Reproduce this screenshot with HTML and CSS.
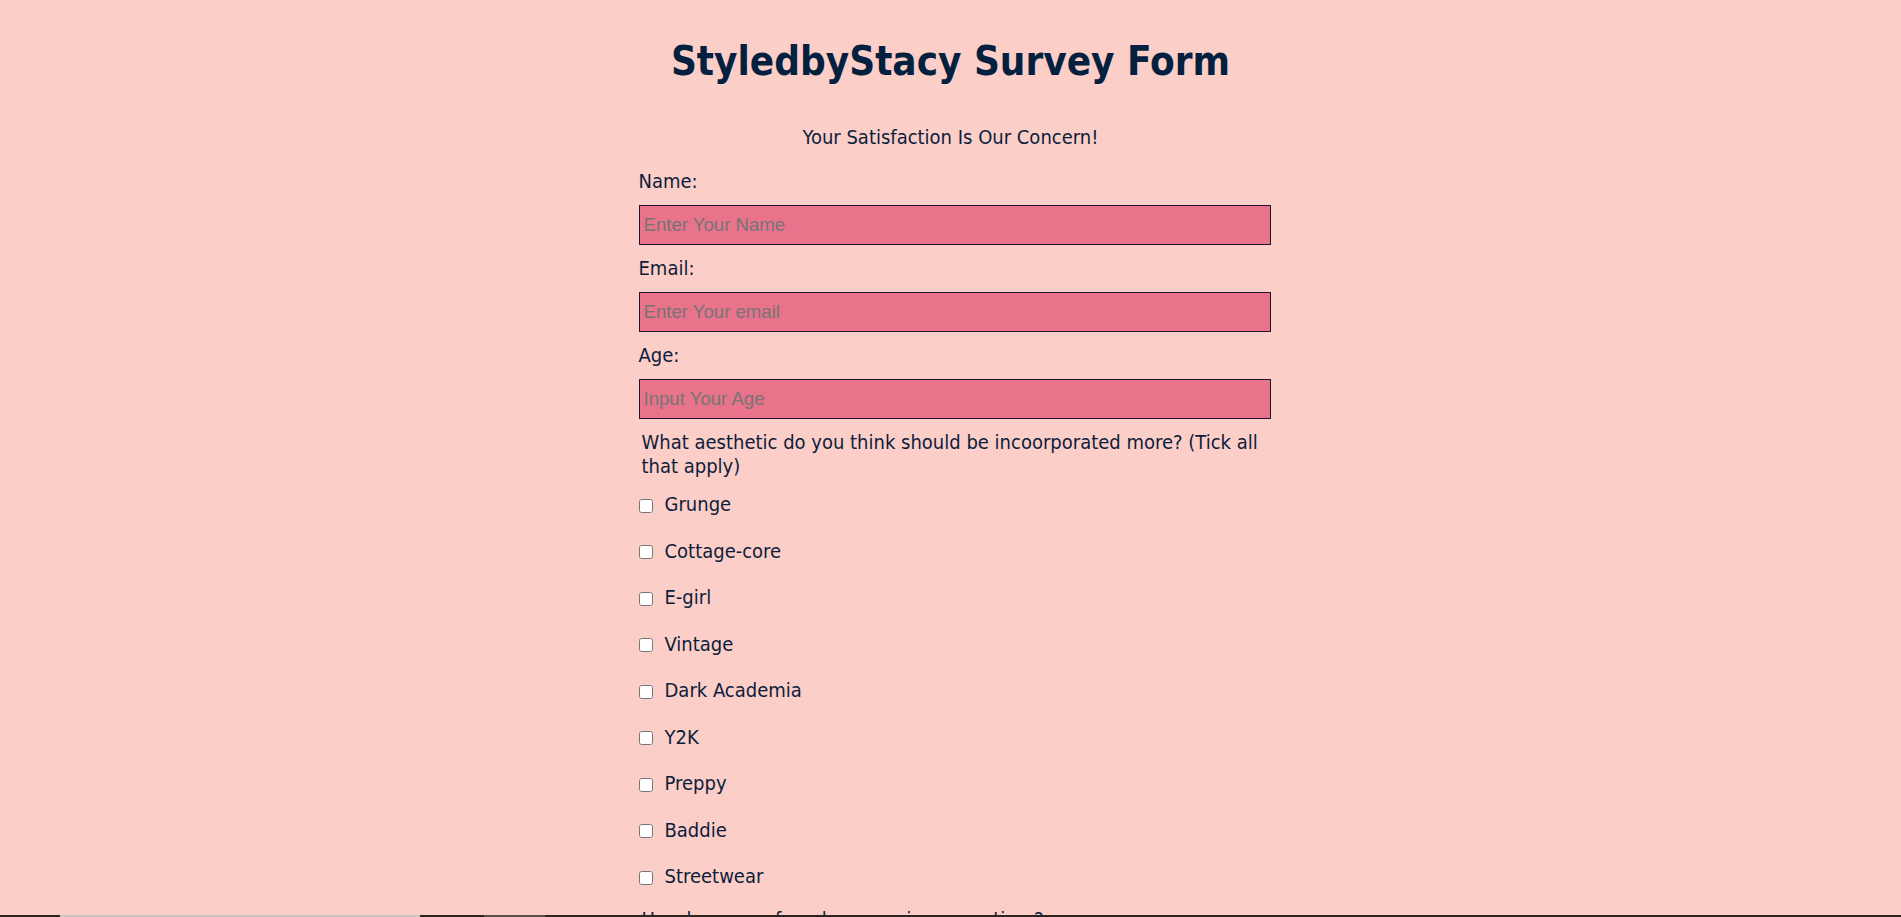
FILE: index.html
```html
<!DOCTYPE html>
<html lang="en">
<head>
<meta charset="utf-8">
<title>StyledbyStacy Survey Form</title>
<link rel="stylesheet" href="styles.css">
</head>
<body>
<h1 id="title" class="title">StyledbyStacy Survey Form</h1>
<p id="description" class="description">Your Satisfaction Is Our Concern!</p>
<form id="survey-form" class="survey">
  <label class="field-label" id="name-label" for="name">Name:</label>
  <input class="text-input" id="name" type="text" placeholder="Enter Your Name">
  <label class="field-label" id="email-label" for="email">Email:</label>
  <input class="text-input" id="email" type="email" placeholder="Enter Your email">
  <label class="field-label" id="number-label" for="number">Age:</label>
  <input class="text-input" id="number" type="number" placeholder="Input Your Age">

  <p class="question">What aesthetic do you think should be incoorporated more? (Tick all that apply)</p>
  <ul class="options">
    <li class="option"><input class="check" type="checkbox" id="a1"><label for="a1">Grunge</label></li>
    <li class="option"><input class="check" type="checkbox" id="a2"><label for="a2">Cottage-core</label></li>
    <li class="option"><input class="check" type="checkbox" id="a3"><label for="a3">E-girl</label></li>
    <li class="option"><input class="check" type="checkbox" id="a4"><label for="a4">Vintage</label></li>
    <li class="option"><input class="check" type="checkbox" id="a5"><label for="a5">Dark Academia</label></li>
    <li class="option"><input class="check" type="checkbox" id="a6"><label for="a6">Y2K</label></li>
    <li class="option"><input class="check" type="checkbox" id="a7"><label for="a7">Preppy</label></li>
    <li class="option"><input class="check" type="checkbox" id="a8"><label for="a8">Baddie</label></li>
    <li class="option"><input class="check" type="checkbox" id="a9"><label for="a9">Streetwear</label></li>
  </ul>

  <p class="question question-next">How have you found our services over time?</p>
</form>
<div class="screen-edge"><span class="edge-seg edge-light"></span><span class="edge-seg edge-mid"></span></div>
</body>
</html>
```

FILE: styles.css
```css
html {
  scrollbar-width: none;
}

body {
  margin: 0;
  background: #fccec8;
  color: #0c1d3b;
  font-family: "DejaVu Sans Condensed", "DejaVu Sans", sans-serif;
  font-stretch: condensed;
  font-size: 20px;
  line-height: 24px;
  overflow: hidden;
}

.title {
  margin: 37px 0 0;
  font-size: 40px;
  line-height: 48px;
  font-weight: bold;
  text-align: center;
  color: #03213f;
}

.description {
  margin: 40px 0 0;
  text-align: center;
}

.survey {
  width: 640px;
  box-sizing: border-box;
  margin: 20px auto 0;
  padding-left: 8px;
}

.field-label {
  display: block;
  margin-bottom: 12px;
}

.text-input {
  display: block;
  box-sizing: border-box;
  width: 632px;
  height: 40px;
  margin: 0 0 11px;
  padding: 0 4px;
  border: 1px solid #1b1530;
  background: #e8738b;
  font-family: "Liberation Sans", Arial, sans-serif;
  font-size: 18.6px;
  color: #0c1d3b;
  outline: none;
}

.text-input::placeholder {
  color: #757575;
}

.question {
  margin: 0;
  padding-left: 3px;
}

.question-next {
  margin-top: -4px;
}

.options {
  list-style: none;
  margin: 14px 0 0;
  padding: 0;
}

.option {
  display: flex;
  align-items: center;
  height: 24px;
  margin-bottom: 22.5px;
}

.check {
  width: 14px;
  height: 14px;
  margin: 3px 12px 0 0;
  flex: none;
}

.screen-edge {
  position: fixed;
  left: 0;
  right: 0;
  bottom: 0;
  height: 2px;
  background: #2e2320;
}

.edge-seg {
  position: absolute;
  top: 0;
  height: 2px;
}

.edge-light {
  left: 60px;
  width: 360px;
  background: #c9c2c1;
}

.edge-mid {
  left: 484px;
  width: 61px;
  background: #5a4a48;
}
```
